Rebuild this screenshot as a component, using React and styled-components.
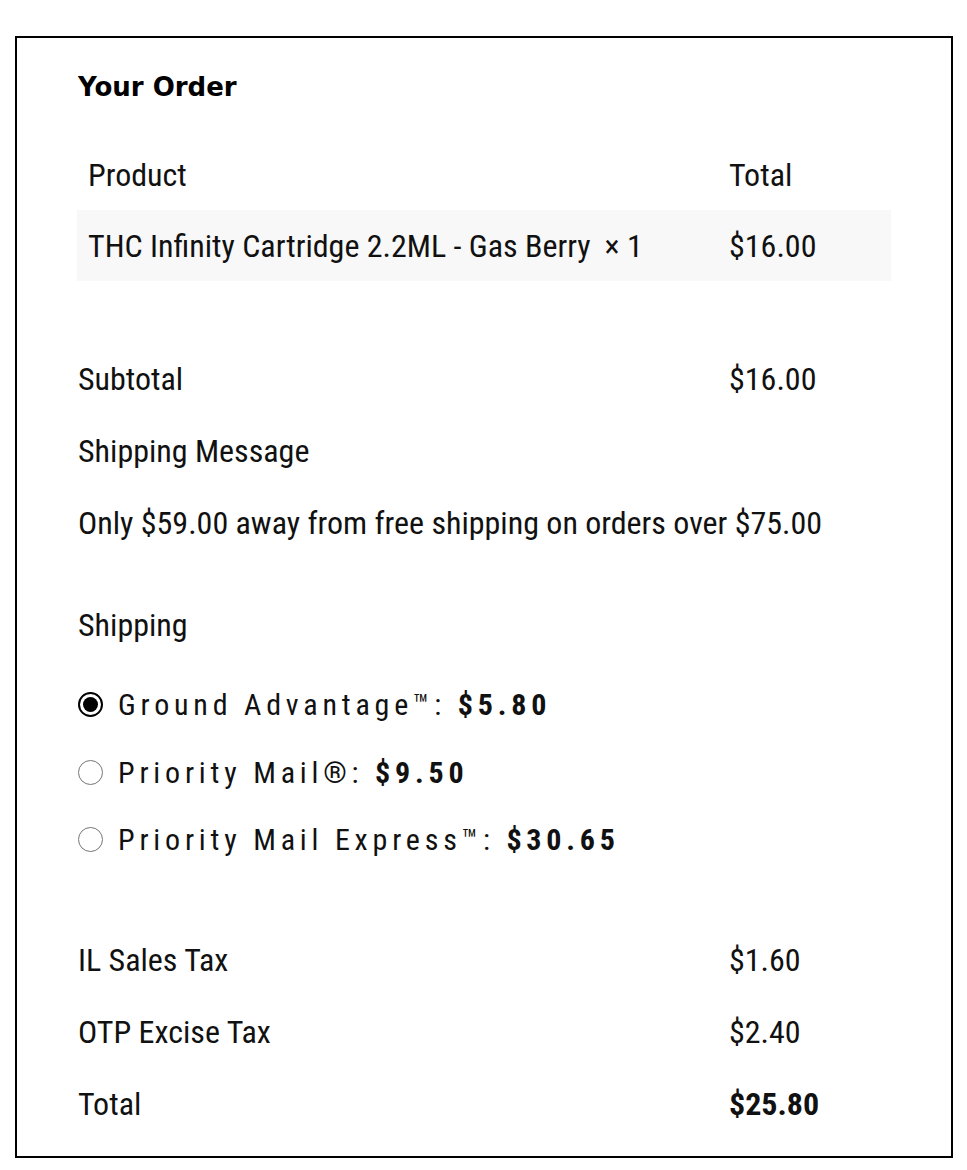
import React from 'react';
import styled, { createGlobalStyle } from 'styled-components';

const GlobalStyle = createGlobalStyle`
    html, body {
        margin: 0;
        padding: 0;
        background: #ffffff;
    }
    body {
        font-family: "Roboto Condensed", "Liberation Sans Narrow", Roboto, sans-serif;
        font-stretch: 75%;
        color: #111111;
    }
`;

const Page = styled.div`
    padding: 36px 14px 12px 15px;
`;

const OrderBox = styled.section`
    border: 2px solid #000000;
    padding: 35px 61px 16px 61px;
    box-sizing: border-box;
    width: 938px;
`;

const Heading = styled.h3`
    margin: 0 0 38px 0;
    font-family: "DejaVu Sans", sans-serif;
    font-stretch: 100%;
    font-weight: 700;
    font-size: 26px;
    line-height: 28px;
    color: #000000;
`;

const Table = styled.table`
    width: 814px;
    margin-left: -1px;
    border-collapse: collapse;
    font-size: 32px;
`;

const Th = styled.th`
    text-align: left;
    font-weight: 400;
    padding: 0 11px;
    height: 71px;
    width: ${(p) => p.width || 'auto'};
`;

const Td = styled.td`
    padding: 0 11px;
    height: 71px;
    background: #f8f8f8;
`;

const Qty = styled.span`
    margin-left: 14px;
`;

const Summary = styled.div`
    margin-top: 62px;
`;

const Row = styled.div`
    display: grid;
    grid-template-columns: 651px 1fr;
    align-items: center;
    height: 72px;
    font-size: 32px;
`;

const Value = styled.span`
    font-weight: ${(p) => (p.bold ? 700 : 400)};
`;

const Message = styled.div`
    height: 72px;
    display: flex;
    align-items: center;
    font-size: 32px;
`;

const ShippingLabel = styled.div`
    margin-top: 30px;
    height: 72px;
    display: flex;
    align-items: center;
    font-size: 32px;
`;

const MethodList = styled.ul`
    list-style: none;
    margin: 10px 0 50px 0;
    padding: 0;
`;

const Method = styled.li`
    display: flex;
    align-items: center;
    height: 67.5px;
    gap: 15px;
    font-size: 30px;
    letter-spacing: 4.8px;
`;

const Radio = styled.span`
    width: 25px;
    height: 25px;
    box-sizing: border-box;
    border-radius: 50%;
    border: ${(p) => (p.checked ? '2px solid #000000' : '1.5px solid #767676')};
    display: flex;
    align-items: center;
    justify-content: center;
    flex-shrink: 0;
    &::after {
        content: '';
        display: ${(p) => (p.checked ? 'block' : 'none')};
        width: 15px;
        height: 15px;
        border-radius: 50%;
        background: #000000;
    }
`;

const Price = styled.strong`
    font-weight: 700;
`;

const methods = [
    { name: 'Ground Advantage™', price: '$5.80', checked: true },
    { name: 'Priority Mail®', price: '$9.50', checked: false },
    { name: 'Priority Mail Express™', price: '$30.65', checked: false },
];

const App = () => (
    <Page>
        <GlobalStyle />
        <OrderBox>
            <Heading>Your Order</Heading>
            <Table>
                <thead>
                    <tr>
                        <Th width="619px">Product</Th>
                        <Th>Total</Th>
                    </tr>
                </thead>
                <tbody>
                    <tr>
                        <Td>
                            THC Infinity Cartridge 2.2ML - Gas Berry
                            <Qty>× 1</Qty>
                        </Td>
                        <Td>$16.00</Td>
                    </tr>
                </tbody>
            </Table>
            <Summary>
                <Row>
                    <span>Subtotal</span>
                    <Value>$16.00</Value>
                </Row>
                <Row>
                    <span>Shipping Message</span>
                </Row>
                <Message>Only $59.00 away from free shipping on orders over $75.00</Message>
                <ShippingLabel>Shipping</ShippingLabel>
                <MethodList>
                    {methods.map((m) => (
                        <Method key={m.name}>
                            <Radio checked={m.checked} />
                            <span>
                                {m.name}: <Price>{m.price}</Price>
                            </span>
                        </Method>
                    ))}
                </MethodList>
                <Row>
                    <span>IL Sales Tax</span>
                    <Value>$1.60</Value>
                </Row>
                <Row>
                    <span>OTP Excise Tax</span>
                    <Value>$2.40</Value>
                </Row>
                <Row>
                    <span>Total</span>
                    <Value bold>$25.80</Value>
                </Row>
            </Summary>
        </OrderBox>
    </Page>
);

export default App;
